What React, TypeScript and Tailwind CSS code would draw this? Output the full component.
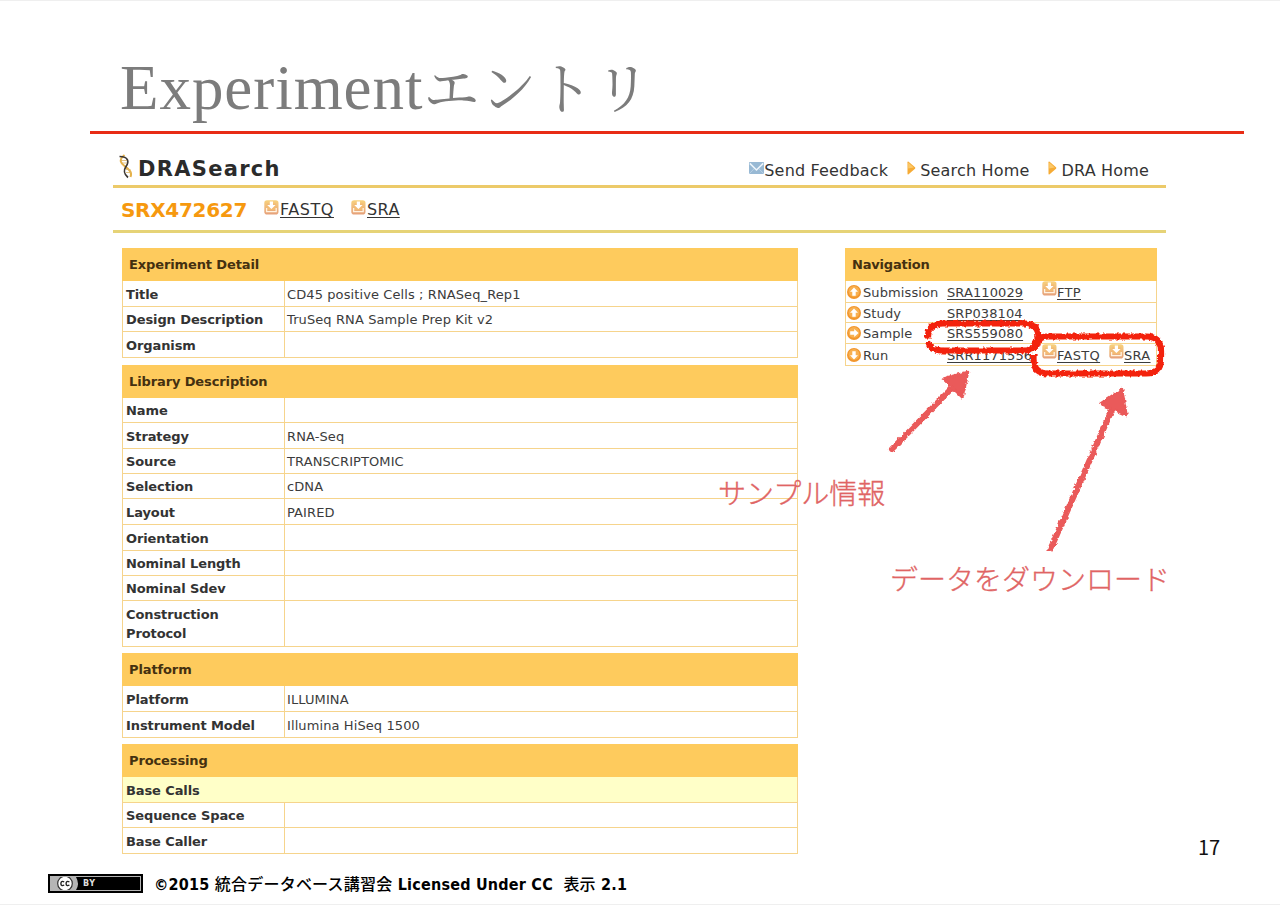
import type { ReactNode } from "react";

type Row = { label: string; value?: string; h: string; shaded?: boolean };
type Section = { title: string; rows: Row[]; gap: string };

const sections: Section[] = [
  {
    title: "Experiment Detail",
    gap: "mb-[7px]",
    rows: [
      { label: "Title", value: "CD45 positive Cells ; RNASeq_Rep1", h: "h-[26px]" },
      { label: "Design Description", value: "TruSeq RNA Sample Prep Kit v2", h: "h-[25px]" },
      { label: "Organism", h: "h-[26px]" },
    ],
  },
  {
    title: "Library Description",
    gap: "mb-[6px]",
    rows: [
      { label: "Name", h: "h-[25px]" },
      { label: "Strategy", value: "RNA-Seq", h: "h-[26px]" },
      { label: "Source", value: "TRANSCRIPTOMIC", h: "h-[25px]" },
      { label: "Selection", value: "cDNA", h: "h-[25px]" },
      { label: "Layout", value: "PAIRED", h: "h-[26px]" },
      { label: "Orientation", h: "h-[26px]" },
      { label: "Nominal Length", h: "h-[25px]" },
      { label: "Nominal Sdev", h: "h-[25px]" },
      { label: "Construction Protocol", h: "h-[46px]" },
    ],
  },
  {
    title: "Platform",
    gap: "mb-[6px]",
    rows: [
      { label: "Platform", value: "ILLUMINA", h: "h-[26px]" },
      { label: "Instrument Model", value: "Illumina HiSeq 1500", h: "h-[26px]" },
    ],
  },
  {
    title: "Processing",
    gap: "",
    rows: [
      { label: "Base Calls", h: "h-[26px]", shaded: true },
      { label: "Sequence Space", h: "h-[25px]" },
      { label: "Base Caller", h: "h-[26px]" },
    ],
  },
];

function DownloadIcon({ className = "" }: { className?: string }) {
  return (
    <svg viewBox="0 0 15 15" className={"h-[15px] w-[15px] shrink-0 " + className}>
      <defs>
        <linearGradient id="dl" x1="0" y1="0" x2="0" y2="1">
          <stop offset="0" stopColor="#f8d27c" />
          <stop offset="1" stopColor="#e6a07a" />
        </linearGradient>
      </defs>
      <rect x="0.3" y="0.2" width="14.2" height="14.3" rx="2.8" fill="url(#dl)" />
      <path d="M3 3.500h9v6.500H3z" fill="#f3bb74" />
      <path d="M5.800 1.500h3.200v3.500h2.600L7.400 9 3.200 5h2.600z" fill="#fff" />
      <path d="M2.600 8v3.600h9.600V8" stroke="#fff3e2" strokeWidth="1.300" fill="none" />
    </svg>
  );
}

function ArrowBadge({ turn }: { turn: number }) {
  return (
    <svg viewBox="0 0 14 14" className="h-[14px] w-[14px] shrink-0">
      <circle cx="7" cy="7" r="7" fill="#f2962c" />
      <circle cx="7" cy="6.400" r="5.400" fill="#f8b050" />
      <path
        d="M7 2.400 11 6.800H8.700v4H5.300v-4H3z"
        fill="#fff"
        transform={`rotate(${turn} 7 7)`}
      />
    </svg>
  );
}

function Triangle() {
  return (
    <svg viewBox="0 0 9 14" className="mb-1.5 h-[14px] w-[9px] shrink-0">
      <path d="M0.5 1.2Q0.5 0 1.6 0.7L8 6.2Q8.8 7 8 7.8L1.6 13.2Q0.5 14 0.5 12.8z" fill="#f6ab35" />
      <path d="M1.2 1.6 6.8 6.4 1.2 7.6z" fill="#fbc868" />
    </svg>
  );
}

function Envelope() {
  return (
    <svg viewBox="0 0 15 12" className="mb-1.5 h-[12px] w-[15px] shrink-0">
      <rect width="15" height="12" rx="0.8" fill="#98b9d4" />
      <path d="M0 12 5.4 6.4M15 12 9.6 6.4" stroke="#bcd3e6" strokeWidth="0.9" />
      <path d="M0.8 1.4 7.5 8 14.2 1.4" stroke="#eef5fb" strokeWidth="1.5" fill="none" />
    </svg>
  );
}

function Helix() {
  return (
    <svg viewBox="0 0 15 25" className="h-[25px] w-[15px] shrink-0" fill="none">
      <path d="M6.5 1C0 6 3 9.500 7 12.500S14.500 18 12.500 23" stroke="#e6b24a" strokeWidth="2" />
      <path d="M1.500 2.500C11 2.500 11 8 8 12.500S6 20 10 23.500" stroke="#3c3733" strokeWidth="1.700" />
      <path d="M3 6.500h6M4 9h5M8 15.500h4.500M8 18.500h5" stroke="#d9b468" strokeWidth="0.800" />
    </svg>
  );
}

function DetailSection({ title, rows, gap }: Section) {
  return (
    <section className={"border-x border-[#f6d48c] text-[13px] " + gap}>
      <h2 className="-mx-px flex h-[33px] items-center bg-[#fecb5d] pl-[7px] font-bold tracking-[-0.12px] text-[#443010]">
        {title}
      </h2>
      {rows.map((r) => (
        <div
          key={r.label}
          className={"flex border-b border-[#f6d48c] " + r.h + (r.shaded ? " bg-[#ffffc8]" : "")}
        >
          <div
            className={
              "flex w-[162px] shrink-0 items-center pl-[3px] pt-px font-bold leading-[19px] tracking-[-0.1px] text-[#333] " +
              (r.shaded ? "" : "border-r border-[#f6d48c] pr-10 whitespace-nowrap")
            }
          >
            <span className={r.label === "Construction Protocol" ? "whitespace-normal" : ""}>{r.label}</span>
          </div>
          <div className="flex items-center pl-[2px] pt-[2px] tracking-[0.1px] text-[#3c3c3c]">{r.value}</div>
        </div>
      ))}
    </section>
  );
}

function NavRow({ turn, label, id, h, children }: { turn: number; label: string; id: string; h: string; children?: ReactNode }) {
  return (
    <div className={"flex items-center border-b border-[#f6d48c] pl-px " + h}>
      <ArrowBadge turn={turn} />
      <span className="w-[86px] pl-[2px] pt-[2px]">{label}</span>
      <span className="w-[95px] pt-[2px] underline underline-offset-2">{id}</span>
      {children}
    </div>
  );
}

function Marks() {
  return (
    <svg viewBox="0 0 1280 905" className="pointer-events-none absolute -top-px left-0 h-[905px] w-[1280px]" fill="none">
      <defs>
        <filter id="crayon" x="-10%" y="-20%" width="120%" height="140%">
          <feTurbulence type="fractalNoise" baseFrequency="0.3" numOctaves="2" seed="4" result="n" />
          <feDisplacementMap in="SourceGraphic" in2="n" scale="4" xChannelSelector="R" yChannelSelector="G" />
        </filter>
      </defs>
      <g stroke="#f3200c" strokeWidth="6.200" filter="url(#crayon)">
        <path d="M928 338.500V337Q928 323.500 943 323.500H1024Q1038.500 323.500 1038.500 337T1024 350.500H943Q929 350.500 928 341" />
        <path d="M1033.500 351Q1033.500 336.500 1048 336.500H1146Q1161 336.500 1161 351V359Q1161 373.500 1146 373.500H1048Q1033.500 373.500 1033.500 359V354" />
      </g>
      <g stroke="#ea5a5a" strokeWidth="6" strokeLinecap="round" filter="url(#crayon)">
        <path d="M892 449 953 387" />
        <path d="M1050.500 549 1114 405" />
        <path d="M968 372 943 378.500 962.500 397.500Z" fill="#ea5a5a" strokeWidth="2.500" strokeLinejoin="round" />
        <path d="M1122 389 1100.500 403.500 1126.500 415Z" fill="#ea5a5a" strokeWidth="2.500" strokeLinejoin="round" />
      </g>
    </svg>
  );
}

export default function App() {
  return (
    <main className="relative flex h-[905px] w-[1280px] flex-col overflow-hidden border-y border-[#efefef] bg-white font-['DejaVu_Sans',sans-serif]">
      <header className="ml-[90px] h-[133px] w-[1154px] border-b-[3px] border-[#e82c15] pl-[30px] pt-[51px]">
        <h1 className="flex items-baseline whitespace-nowrap leading-[72px] text-[#7c7c7c]">
          <span className="font-['Liberation_Serif',serif] text-[63px] tracking-[0.95px]">Experiment</span>
          <span className="-mt-1 font-['Noto_Serif_CJK_JP',serif] text-[56px] tracking-[1px]">エントリ</span>
        </h1>
      </header>

      <div className="ml-[113px] flex h-[54px] w-[1053px] items-center border-b-[3px] border-[#ecca69] pl-[5px] pt-[14px] text-[#333]">
        <Helix />
        <span className="ml-[5px] pt-[7px] text-[21px] font-bold tracking-[1.3px] text-[#2b2b2b]">DRASearch</span>
        <nav className="ml-auto flex items-center pr-[17px] pt-[8px] text-[16px] tracking-[0.18px]">
          <Envelope />
          <span>Send Feedback</span>
          <span className="ml-[19px] flex items-center gap-[4px]"><Triangle />Search Home</span>
          <span className="ml-[19px] flex items-center gap-[4px]"><Triangle />DRA Home</span>
        </nav>
      </div>

      <div className="ml-[113px] flex h-[45px] w-[1053px] items-center border-b-[3px] border-[#e6d377] pl-[8px] text-[16px] text-[#333]">
        <span className="w-[143px] pt-px text-[20px] font-bold tracking-[-0.3px] text-[#f6990f]">SRX472627</span>
        <DownloadIcon className="mb-1" />
        <span className="w-[72px] pl-px pt-[2px] tracking-[0.55px] underline underline-offset-2">FASTQ</span>
        <DownloadIcon className="mb-1" />
        <span className="pl-px pt-[2px] tracking-[0.4px] underline underline-offset-2">SRA</span>
      </div>

      <div className="ml-[122px] mt-[15px] flex items-start gap-[47px]">
        <div className="w-[676px]">
          {sections.map((s) => (
            <DetailSection key={s.title} {...s} />
          ))}
        </div>
        <aside className="w-[312px] border-x border-[#f6d48c] text-[13px] tracking-[0.1px] text-[#3c3c3c]">
          <h2 className="-mx-px flex h-[33px] items-center bg-[#fecb5d] pl-[7px] font-bold tracking-[-0.2px] text-[#443010]">
            Navigation
          </h2>
          <NavRow turn={0} label="Submission" id="SRA110029" h="h-[22px]">
            <DownloadIcon className="mb-1.5" />
            <span className="pt-[2px] tracking-[0.3px] underline underline-offset-2">FTP</span>
          </NavRow>
          <NavRow turn={0} label="Study" id="SRP038104" h="h-[20px]" />
          <NavRow turn={90} label="Sample" id="SRS559080" h="h-[21px]" />
          <NavRow turn={180} label="Run" id="SRR1171556" h="h-[22px]">
            <DownloadIcon className="mb-1.5" />
            <span className="w-[52px] pt-[2px] tracking-[0.3px] underline underline-offset-2">FASTQ</span>
            <DownloadIcon className="mb-1.5" />
            <span className="pt-[2px] tracking-[0.3px] underline underline-offset-2">SRA</span>
          </NavRow>
        </aside>
      </div>

      <footer className="ml-[48px] mt-[18px] flex h-[22px] items-center">
        <div className="flex h-[19px] w-[95px] items-stretch border-2 border-black bg-[#b5b5b5] p-px">
          <svg viewBox="0 0 30 13" className="h-[13px] w-[30px]" fill="none">
            <path d="M25 0h5v13h-5q4-6 0-13z" fill="#000" />
            <circle cx="14" cy="6.500" r="7.300" fill="#fff" stroke="#333" strokeWidth="1.200" />
            <path d="M13.200 4.800Q9.900 3.400 9.900 6.500T13.200 8.200M18.400 4.800Q15.100 3.400 15.100 6.500T18.400 8.200" stroke="#222" strokeWidth="1.400" />
          </svg>
          <span className="flex flex-1 items-center bg-black pl-[2px] pt-[2px] text-[8px] font-bold leading-none tracking-[0.5px] text-[#ddd]">BY</span>
        </div>
        <p className="ml-[11px] mt-[3px] whitespace-pre font-['DejaVu_Sans_Condensed','Noto_Sans_CJK_JP',sans-serif] text-[16px] font-bold leading-none tracking-[0.22px] text-black">
          ©2015 <span className="font-medium">統合データベース講習会</span> Licensed Under CC  <span className="font-medium">表示</span> 2.1
        </p>
      </footer>

      <Marks />
      <p className="absolute left-[718px] top-[471px] whitespace-nowrap font-['Noto_Sans_CJK_JP',sans-serif] text-[28px] font-light leading-[40px] text-[#e06464] [-webkit-text-stroke:0.35px_#e06464]">サンプル情報</p>
      <p className="absolute left-[890px] top-[557px] whitespace-nowrap font-['Noto_Sans_CJK_JP',sans-serif] text-[28px] font-light leading-[40px] text-[#e06464] [-webkit-text-stroke:0.35px_#e06464]">データをダウンロード</p>
      <p className="absolute left-[1198px] top-[834px] font-['Noto_Sans_CJK_JP',sans-serif] text-[20px] leading-[24px] text-[#111]">17</p>
    </main>
  );
}
